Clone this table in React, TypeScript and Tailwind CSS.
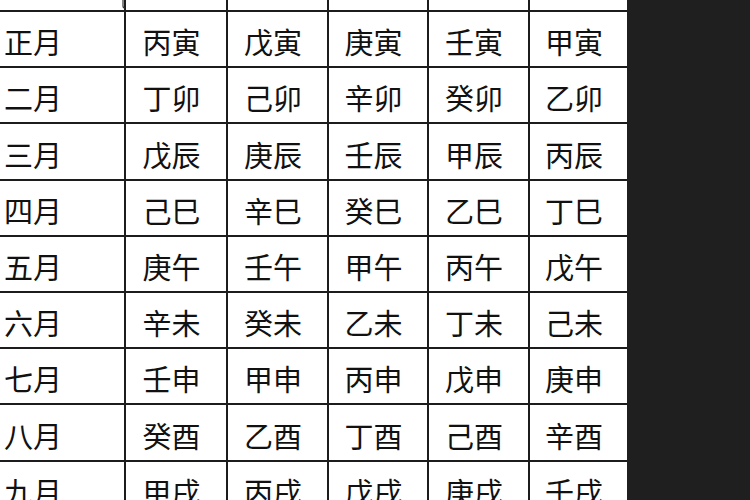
import React from "react";

const rows: string[][] = [
  ["", "", "", "", "", ""],
  ["正月", "丙寅", "戊寅", "庚寅", "壬寅", "甲寅"],
  ["二月", "丁卯", "己卯", "辛卯", "癸卯", "乙卯"],
  ["三月", "戊辰", "庚辰", "壬辰", "甲辰", "丙辰"],
  ["四月", "己巳", "辛巳", "癸巳", "乙巳", "丁巳"],
  ["五月", "庚午", "壬午", "甲午", "丙午", "戊午"],
  ["六月", "辛未", "癸未", "乙未", "丁未", "己未"],
  ["七月", "壬申", "甲申", "丙申", "戊申", "庚申"],
  ["八月", "癸酉", "乙酉", "丁酉", "己酉", "辛酉"],
  ["九月", "甲戌", "丙戌", "戊戌", "庚戌", "壬戌"],
];

const heights = ["h-[10px]", "h-[56px]", "h-[56px]", "h-[57px]", "h-[56px]", "h-[56px]", "h-[56px]", "h-[56px]", "h-[57px]", "h-[56px]"];
const widths = ["w-[126px]", "w-[102px]", "w-[101px]", "w-[100px]", "w-[101px]", "w-[97px]"];

export default function App() {
  return (
    <div
      className="w-[750px] h-[500px] overflow-hidden flex bg-[#1f1f1f]"
      style={{ fontFamily: '"Noto Sans CJK SC", "Noto Sans", sans-serif' }}
    >
      <div className="relative w-[627px] h-[500px] bg-white flex flex-col shrink-0">
        {rows.map((row, ri) => (
          <div
            key={ri}
            className={`flex shrink-0 ${heights[ri]} ${ri > 0 ? "border-t-2 border-[#1c1c1c]" : ""}`}
          >
            {row.map((cell, ci) => (
              <div
                key={ci}
                className={`${widths[ci]} shrink-0 h-full flex items-center ${
                  ci < 5 ? "border-r-2 border-[#1c1c1c]" : ""
                } ${ci === 0 ? "justify-start pl-[4px]" : "justify-center pr-[9px]"} text-[29px] leading-none text-[#111] pt-[5px]`}
              >
                {cell}
              </div>
            ))}
          </div>
        ))}
        <svg className="absolute left-[119px] top-0" width="8" height="10" viewBox="0 0 8 10">
          <path d="M4 0 L4 6 Q4 8 6 8" stroke="#333" strokeWidth="1.2" fill="none" />
        </svg>
      </div>
    </div>
  );
}
